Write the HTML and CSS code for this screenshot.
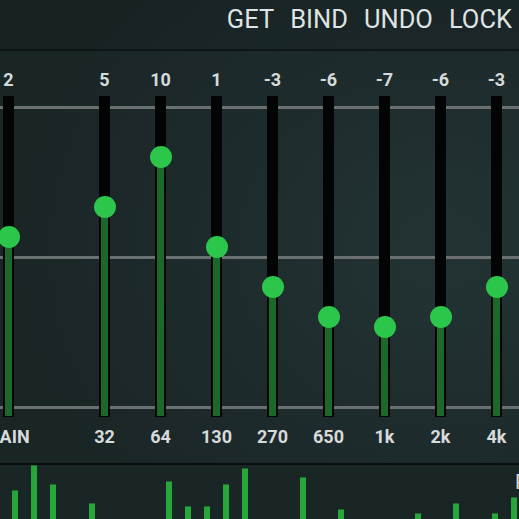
FILE: index.html
```html
<!DOCTYPE html>
<html>
<head>
<meta charset="utf-8">
<link rel="stylesheet" href="styles.css">
</head>
<body>
<div class="app">
  <header class="topbar">
    <span class="action">GET</span>
    <span class="action">BIND</span>
    <span class="action">UNDO</span>
    <span class="action">LOCK</span>
  </header>
  <section class="eq">
    <div class="band" style="--db:2">
      <div class="value">2</div>
      <div class="track"><div class="fill"></div><div class="knob"></div></div>
      <div class="freq">GAIN</div>
    </div>
    <div class="spacer"></div>
    <div class="band" style="--db:5">
      <div class="value">5</div>
      <div class="track"><div class="fill"></div><div class="knob"></div></div>
      <div class="freq">32</div>
    </div>
    <div class="band" style="--db:10">
      <div class="value">10</div>
      <div class="track"><div class="fill"></div><div class="knob"></div></div>
      <div class="freq">64</div>
    </div>
    <div class="band" style="--db:1">
      <div class="value">1</div>
      <div class="track"><div class="fill"></div><div class="knob"></div></div>
      <div class="freq">130</div>
    </div>
    <div class="band" style="--db:-3">
      <div class="value">-3</div>
      <div class="track"><div class="fill"></div><div class="knob"></div></div>
      <div class="freq">270</div>
    </div>
    <div class="band" style="--db:-6">
      <div class="value">-6</div>
      <div class="track"><div class="fill"></div><div class="knob"></div></div>
      <div class="freq">650</div>
    </div>
    <div class="band" style="--db:-7">
      <div class="value">-7</div>
      <div class="track"><div class="fill"></div><div class="knob"></div></div>
      <div class="freq">1k</div>
    </div>
    <div class="band" style="--db:-6">
      <div class="value">-6</div>
      <div class="track"><div class="fill"></div><div class="knob"></div></div>
      <div class="freq">2k</div>
    </div>
    <div class="band" style="--db:-3">
      <div class="value">-3</div>
      <div class="track"><div class="fill"></div><div class="knob"></div></div>
      <div class="freq">4k</div>
    </div>
  </section>
  <section class="spectrum">
    <div class="cell"><div class="bar" style="height:29px"></div></div>
    <div class="cell"><div class="bar" style="height:54px"></div></div>
    <div class="cell"><div class="bar" style="height:35px"></div></div>
    <div class="cell"></div>
    <div class="cell"><div class="bar" style="height:16px"></div></div>
    <div class="cell"></div>
    <div class="cell"></div>
    <div class="cell"></div>
    <div class="cell"><div class="bar" style="height:38px"></div></div>
    <div class="cell"><div class="bar" style="height:13px"></div></div>
    <div class="cell"><div class="bar" style="height:13px"></div></div>
    <div class="cell"><div class="bar" style="height:35px"></div></div>
    <div class="cell"><div class="bar" style="height:51px"></div></div>
    <div class="cell"></div>
    <div class="cell"></div>
    <div class="cell"><div class="bar" style="height:42px"></div></div>
    <div class="cell"></div>
    <div class="cell"><div class="bar" style="height:10px"></div></div>
    <div class="cell"></div>
    <div class="cell"></div>
    <div class="cell"></div>
    <div class="cell"><div class="bar" style="height:6px"></div></div>
    <div class="cell"></div>
    <div class="cell"><div class="bar" style="height:16px"></div></div>
    <div class="cell"></div>
    <div class="cell"><div class="bar" style="height:6px"></div></div>
    <div class="cell"><div class="bar" style="height:22px"></div></div>
    <span class="edge-label">P</span>
  </section>
</div>
</body>
</html>
```
FILE: styles.css
```css
html, body {
  margin: 0;
  padding: 0;
  width: 519px;
  height: 519px;
  overflow: hidden;
  background: #1d2a2b;
  font-family: Roboto, "Liberation Sans", sans-serif;
}

.app {
  width: 519px;
  height: 519px;
  overflow: hidden;
  background: radial-gradient(ellipse 420px 360px at 440px 250px, #233334 0%, #1e2b2c 55%, #1a2526 100%);
}

.topbar {
  height: 49px;
  box-sizing: border-box;
  padding: 4px 7px 0 0;
  display: flex;
  justify-content: flex-end;
  gap: 16px;
  font-size: 25.5px;
  line-height: 30px;
  color: #dfe3e3;
  background: rgba(10, 16, 17, 0.12);
}

.eq {
  border-top: 2px solid #0f1516;
  box-sizing: border-box;
  height: 414px;
  padding: 19px 0 0 0;
  margin-left: -19.5px;
  display: grid;
  grid-template-columns: 56px 40px repeat(8, 56px);
  align-items: start;
  background-image:
    linear-gradient(#6a7070, #6a7070),
    linear-gradient(#6a7070, #6a7070),
    linear-gradient(#6a7070, #6a7070);
  background-repeat: no-repeat;
  background-size: 100% 3px;
  background-position: 0 54.5px, 0 204.5px, 0 354.5px;
}

.band {
  display: flex;
  flex-direction: column;
  align-items: center;
}

.value, .freq {
  font-weight: 700;
  font-size: 18px;
  line-height: 20px;
  height: 20px;
  color: #d6dada;
  white-space: nowrap;
}

.track {
  position: relative;
  margin-top: 6px;
  width: 11px;
  height: 321px;
  background: #030404;
}

.fill {
  position: absolute;
  left: 2px;
  right: 2px;
  bottom: 1px;
  top: calc(160.5px - var(--db) * 10px);
  background: #186a2a;
}

.knob {
  position: absolute;
  left: 50%;
  top: calc(160.5px - var(--db) * 10px);
  width: 22px;
  height: 22px;
  margin: -11px 0 0 -11px;
  border-radius: 50%;
  background: #2cc64b;
}

.freq {
  margin-top: 10px;
}

.spectrum {
  position: relative;
  border-top: 2px solid #090d0d;
  height: 54px;
  padding-left: 12px;
  display: flex;
  align-items: flex-end;
  background: #1a2526;
}

.cell {
  flex: 0 0 19.2px;
  height: 54px;
  display: flex;
  align-items: flex-end;
}

.bar {
  width: 6px;
  background: #27a63a;
  border-top: 1px solid #1e6e2c;
  box-sizing: border-box;
}

.edge-label {
  position: absolute;
  left: 515px;
  top: 6px;
  font-size: 20px;
  line-height: 22px;
  color: #d8dcdc;
}
```
